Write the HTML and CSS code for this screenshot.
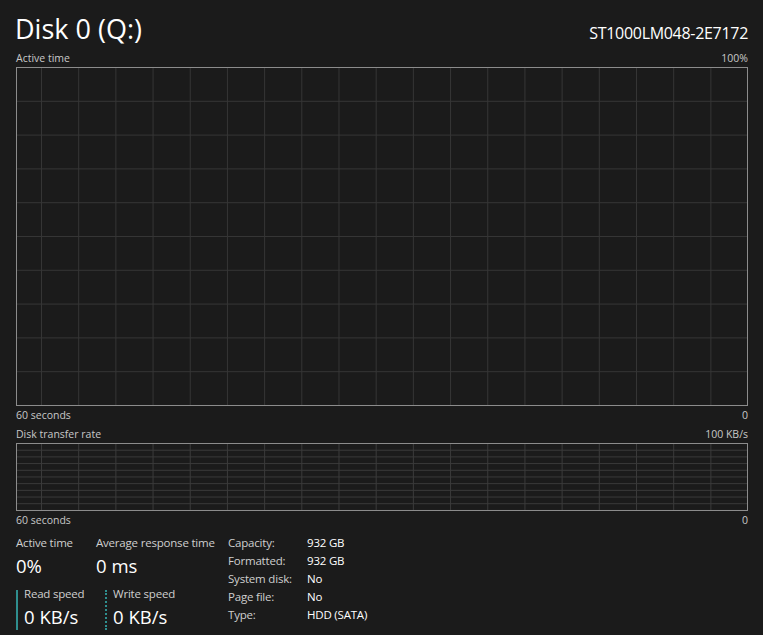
FILE: index.html
```html
<!DOCTYPE html>
<html lang="en">
<head>
    <meta charset="UTF-8">
    <title>Disk 0 (Q:)</title>
    <link rel="stylesheet" href="styles.css">
</head>
<body>

    <div class="header">
        <h1>Disk 0 (Q:)</h1>
        <div class="model">ST1000LM048-2E7172</div>
    </div>

    <div class="axis">
        <span>Active time</span>
        <span>100%</span>
    </div>
    <div class="graph graph-active"></div>
    <div class="axis below">
        <span>60 seconds</span>
        <span>0</span>
    </div>

    <div class="axis">
        <span>Disk transfer rate</span>
        <span>100 KB/s</span>
    </div>
    <div class="graph graph-rate"></div>
    <div class="axis below">
        <span>60 seconds</span>
        <span>0</span>
    </div>

    <div class="stats">
        <div class="perf">
            <div class="perf-row">
                <div class="stat stat-active">
                    <div class="stat-label">Active time</div>
                    <div class="stat-value">0%</div>
                </div>
                <div class="stat">
                    <div class="stat-label">Average response time</div>
                    <div class="stat-value">0 ms</div>
                </div>
            </div>
            <div class="perf-row speeds">
                <div class="speed speed-read">
                    <div class="stat-label">Read speed</div>
                    <div class="stat-value">0 KB/s</div>
                </div>
                <div class="speed speed-write">
                    <div class="stat-label">Write speed</div>
                    <div class="stat-value">0 KB/s</div>
                </div>
            </div>
        </div>

        <div class="props">
            <span>Capacity:</span><span class="prop-val">932 GB</span>
            <span>Formatted:</span><span class="prop-val">932 GB</span>
            <span>System disk:</span><span class="prop-val">No</span>
            <span>Page file:</span><span class="prop-val">No</span>
            <span>Type:</span><span class="prop-val">HDD (SATA)</span>
        </div>
    </div>

</body>
</html>
```

FILE: styles.css
```css
body {
    font-family: 'Open Sans', 'Noto Sans', sans-serif;
    background: #1b1b1b;
    color: #fff;
    margin: 0;
    padding: 0 15px 0 16px;
}
.header {
    display: flex;
    justify-content: space-between;
    align-items: baseline;
    height: 51px;
}
h1 {
    font-weight: normal;
    font-size: 27px;
    line-height: 30px;
    margin: 0;
    padding-top: 14px;
    margin-left: -1px;
}
.model {
    font-size: 16px;
    letter-spacing: -0.3px;
}
.axis {
    display: flex;
    justify-content: space-between;
    font-size: 10.5px;
    line-height: 14px;
    height: 14px;
    color: #c8c8c8;
    margin-bottom: 2px;
}
.axis.below {
    margin-top: 2px;
    margin-bottom: 5px;
}
.graph {
    border: 1px solid #8c8c8c;
    background-color: #1b1b1b;
}
.graph-active {
    height: 337px;
    background-image:
        linear-gradient(to right, #353535 1px, transparent 1px),
        linear-gradient(to bottom, transparent calc(100% - 1px), #353535 calc(100% - 1px));
    background-size: 37.2px 100%, 100% 33.8px;
    background-position: 24px 0, 0 0;
}
.graph-rate {
    height: 66px;
    background-image:
        linear-gradient(to right, #3a3a3a 1px, transparent 1px),
        linear-gradient(to bottom, transparent calc(100% - 1px), #3a3a3a calc(100% - 1px));
    background-size: 37.2px 100%, 100% 6.7px;
    background-position: 24px 0, 0 0;
}
.stats {
    display: flex;
    margin-top: 7px;
}
.perf {
    width: 212px;
}
.perf-row {
    display: flex;
}
.stat-active {
    width: 80px;
}
.stat-label {
    font-size: 11.5px;
    line-height: 18px;
    color: #cfcfcf;
    letter-spacing: -0.2px;
}
.stat-value {
    font-size: 18.5px;
    line-height: 28px;
}
.speeds {
    margin-top: 7px;
}
.speed {
    padding-left: 6px;
    height: 40px;
    margin-top: 3px;
}
.speed .stat-label {
    line-height: 14px;
    margin-top: -3px;
}
.speed .stat-value {
    line-height: 32px;
}
.speed-read {
    width: 81px;
    border-left: 2px solid #2f8f8f;
}
.speed-write {
    border-left: 2px dotted #2f8f8f;
}
.props {
    display: grid;
    grid-template-columns: 79px auto;
    grid-auto-rows: 18px;
    align-content: start;
    font-size: 11.5px;
    line-height: 18px;
    color: #cfcfcf;
    letter-spacing: -0.2px;
}
.prop-val {
    color: #fff;
}
```
